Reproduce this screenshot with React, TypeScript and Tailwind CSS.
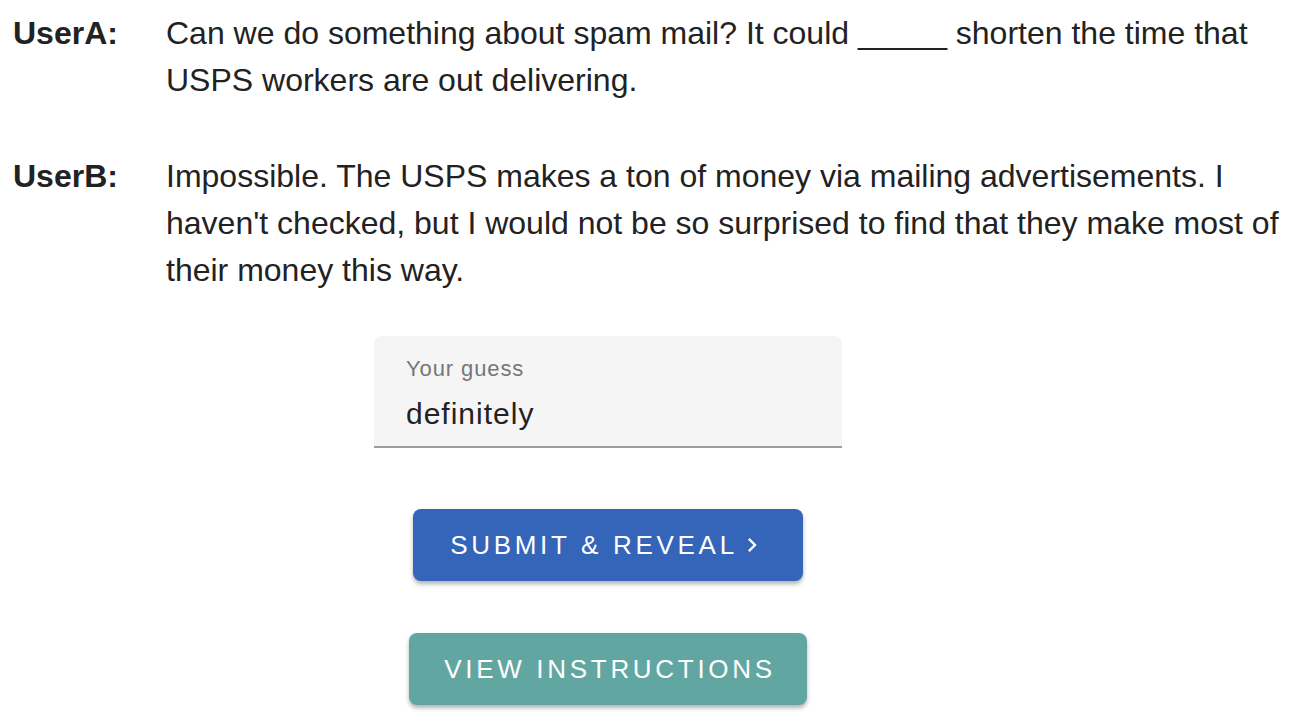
import React from "react";

function Line({ who, children }: { who: string; children: React.ReactNode }) {
  return (
    <div className="flex">
      <div className="w-[166px] shrink-0 font-bold pl-[13px]">{who}</div>
      <div className="flex-1 pr-[8px]">{children}</div>
    </div>
  );
}

export default function App() {
  return (
    <div
      className="w-[1296px] h-[726px] bg-white text-[#222] overflow-hidden"
      style={{ fontFamily: '"Liberation Sans", Arial, sans-serif' }}
    >
      <div className="pt-[10px] text-[32px] leading-[47px] flex flex-col gap-[49px]">
        <Line who="UserA:">
          Can we do something about spam mail? It could _____ shorten the time that USPS workers are out delivering.
        </Line>
        <Line who="UserB:">
          Impossible. The USPS makes a ton of money via mailing advertisements. I haven't checked, but I would not be so surprised to find that they make most of their money this way.
        </Line>
      </div>
      <div className="w-[1216px] flex flex-col items-center mt-[42px]">
        <div className="w-[468px] h-[112px] bg-[#f5f5f5] rounded-t-[8px] border-b-2 border-[#9e9e9e] px-[32px] pt-[18px]">
          <div className="text-[22px] leading-[30px] tracking-[0.9px] text-[#777]">Your guess</div>
          <div className="text-[30px] leading-[40px] tracking-[1px] mt-[10px] text-[#222]">definitely</div>
        </div>
        <button className="mt-[61px] w-[390px] h-[72px] rounded-[8px] bg-[#3465b9] text-white text-[26px] tracking-[3.7px] flex items-center justify-center shadow-[0_3px_4px_rgba(0,0,0,0.3)]">
          <span>SUBMIT &amp; REVEAL</span>
          <svg width="28" height="28" viewBox="0 0 24 24" fill="white">
            <path d="M10 6 8.59 7.41 13.17 12l-4.58 4.59L10 18l6-6z" />
          </svg>
        </button>
        <button className="mt-[52px] w-[398px] h-[72px] rounded-[8px] bg-[#62a6a2] text-white text-[26px] tracking-[3.7px] pl-[4px] flex items-center justify-center shadow-[0_3px_4px_rgba(0,0,0,0.3)]">
          VIEW INSTRUCTIONS
        </button>
      </div>
    </div>
  );
}
